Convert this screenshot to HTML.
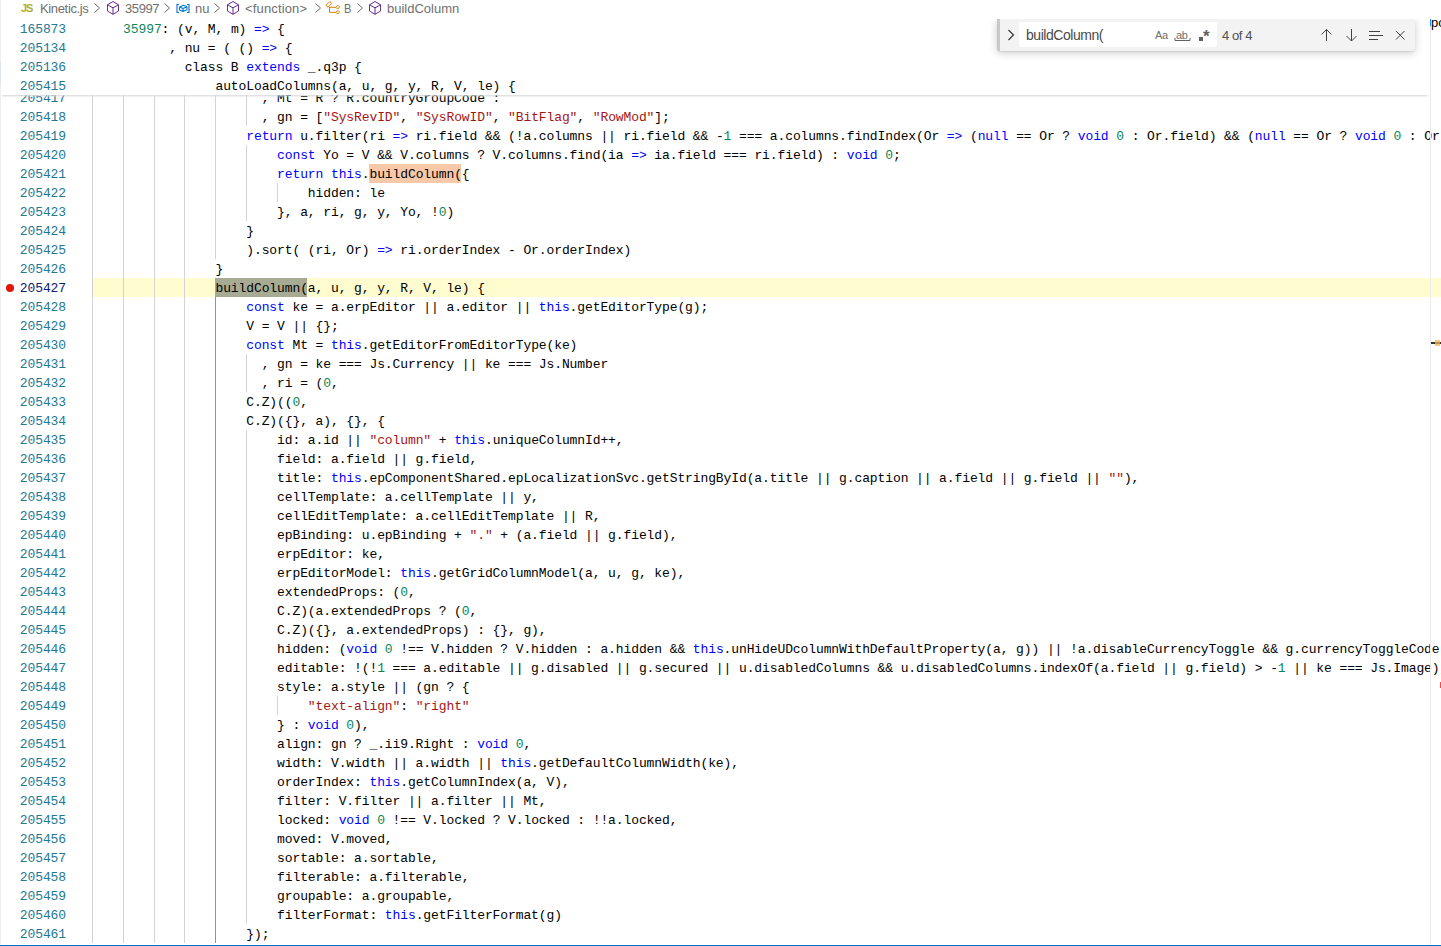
<!DOCTYPE html><html><head><meta charset="utf-8"><style>
*{margin:0;padding:0;box-sizing:border-box}
html,body{width:1441px;height:946px;overflow:hidden;background:#fff}
body{position:relative;font-family:"Liberation Mono",monospace}
i{font-style:normal}
.k{color:#0000ff}.s{color:#a31515}.n{color:#098658}
.ln{position:absolute;left:0;width:66px;text-align:right;height:19px;line-height:19px;font-size:13px;letter-spacing:-0.103px;color:#237893;white-space:pre;padding-top:1.0px}
.ln.act{color:#0b216f}
.cl{position:absolute;left:92.3px;height:19px;line-height:19px;font-size:13px;letter-spacing:-0.103px;color:#000;white-space:pre;padding-top:1.0px}
.g{position:absolute;width:1px;background:#d3d3d3}
.g.act{background:#939393}
#main{position:absolute;left:0;top:0;width:1441px;height:944px;overflow:hidden}
#curline{position:absolute;left:92px;top:278px;width:1349px;height:19px;background:#fffcd0}
#sel{position:absolute;left:215px;top:278px;width:92px;height:19px;background:#a8ab94}
#fm{position:absolute;left:369px;top:164px;width:92px;height:19px;background:#f8c9a8}
#sticky{position:absolute;left:0;top:19px;width:1430px;height:76px;background:#fff;overflow:hidden;box-shadow:#d4d4d4 0 3px 2px -2px}
#crumbs{position:absolute;left:0;top:0;width:1441px;height:19px;background:#fff;font-family:"Liberation Sans",sans-serif;font-size:13px;color:#616161}
#bp{position:absolute;left:6px;top:284px;width:8px;height:8px;border-radius:50%;background:#e51400}
#ruler{position:absolute;left:1430px;top:26px;width:1px;height:919px;background:#ebebeb}
#status{position:absolute;left:0;top:945px;width:1441px;height:1px;background:#0070c8}
#leftb{position:absolute;left:0;top:0;width:1px;height:946px;background:#efefef}
#find{position:absolute;left:997px;top:19px;width:418px;height:32px;background:#f3f3f3;border-left:3px solid #c8c8c8;border-radius:0 0 3px 3px;box-shadow:0 1px 1px rgba(0,0,0,.08),0 2px 8px 0 rgba(0,0,0,.2);clip-path:inset(0 -20px -20px -20px);font-family:"Liberation Sans",sans-serif;font-size:13px;color:#3b3b3b}
#fin{position:absolute;left:19px;top:3px;width:198px;height:25px;background:#fff;border-radius:2px}
.jsi{position:absolute;top:2px;font-family:"Liberation Sans",sans-serif;font-weight:bold;font-size:11px;color:#b0ae2c;letter-spacing:-1px}
.ct{position:absolute;top:0.6px;white-space:pre;color:#707070}
.chev,.ico{position:absolute;top:0}
.ft{position:absolute;white-space:pre}
.sm{font-size:11px;color:#707070}
#po{position:absolute;left:1431px;top:14.5px;font-family:"Liberation Sans",sans-serif;font-size:13px;color:#000}
#pobar{position:absolute;left:1430px;top:19px;width:1px;height:7px;background:#1a85ff}
</style></head><body>
<div id="main">
<div id="curline"></div>
<div id="sel"></div>
<div id="fm"></div>
<div class="g" style="left:92px;top:88px;height:855px"></div>
<div class="g" style="left:123px;top:88px;height:855px"></div>
<div class="g" style="left:154px;top:88px;height:855px"></div>
<div class="g" style="left:184px;top:88px;height:855px"></div>
<div class="g" style="left:215px;top:88px;height:171px"></div>
<div class="g act" style="left:215px;top:297px;height:646px"></div>
<div class="g" style="left:246px;top:88px;height:38px"></div>
<div class="g" style="left:246px;top:145px;height:76px"></div>
<div class="g" style="left:246px;top:354px;height:38px"></div>
<div class="g" style="left:246px;top:430px;height:494px"></div>
<div class="g" style="left:277px;top:183px;height:19px"></div>
<div class="g" style="left:277px;top:696px;height:19px"></div>
<div class="ln" style="top:88px">205417</div>
<div class="cl" style="top:88px">                      , Mt = R ? R.countryGroupCode :</div>
<div class="ln" style="top:107px">205418</div>
<div class="cl" style="top:107px">                      , gn = [<i class="s">&quot;SysRevID&quot;</i>, <i class="s">&quot;SysRowID&quot;</i>, <i class="s">&quot;BitFlag&quot;</i>, <i class="s">&quot;RowMod&quot;</i>];</div>
<div class="ln" style="top:126px">205419</div>
<div class="cl" style="top:126px">                    <i class="k">return</i> u.filter(ri <i class="k">=&gt;</i> ri.field &amp;&amp; (!a.columns || ri.field &amp;&amp; -<i class="n">1</i> === a.columns.findIndex(Or <i class="k">=&gt;</i> (<i class="k">null</i> == Or ? <i class="k">void</i> <i class="n">0</i> : Or.field) &amp;&amp; (<i class="k">null</i> == Or ? <i class="k">void</i> <i class="n">0</i> : Or.field) === ri.field)))</div>
<div class="ln" style="top:145px">205420</div>
<div class="cl" style="top:145px">                        <i class="k">const</i> Yo = V &amp;&amp; V.columns ? V.columns.find(ia <i class="k">=&gt;</i> ia.field === ri.field) : <i class="k">void</i> <i class="n">0</i>;</div>
<div class="ln" style="top:164px">205421</div>
<div class="cl" style="top:164px">                        <i class="k">return</i> <i class="k">this</i>.buildColumn({</div>
<div class="ln" style="top:183px">205422</div>
<div class="cl" style="top:183px">                            hidden: le</div>
<div class="ln" style="top:202px">205423</div>
<div class="cl" style="top:202px">                        }, a, ri, g, y, Yo, !<i class="n">0</i>)</div>
<div class="ln" style="top:221px">205424</div>
<div class="cl" style="top:221px">                    }</div>
<div class="ln" style="top:240px">205425</div>
<div class="cl" style="top:240px">                    ).sort( (ri, Or) <i class="k">=&gt;</i> ri.orderIndex - Or.orderIndex)</div>
<div class="ln" style="top:259px">205426</div>
<div class="cl" style="top:259px">                }</div>
<div class="ln act" style="top:278px">205427</div>
<div class="cl" style="top:278px">                buildColumn(a, u, g, y, R, V, le) {</div>
<div class="ln" style="top:297px">205428</div>
<div class="cl" style="top:297px">                    <i class="k">const</i> ke = a.erpEditor || a.editor || <i class="k">this</i>.getEditorType(g);</div>
<div class="ln" style="top:316px">205429</div>
<div class="cl" style="top:316px">                    V = V || {};</div>
<div class="ln" style="top:335px">205430</div>
<div class="cl" style="top:335px">                    <i class="k">const</i> Mt = <i class="k">this</i>.getEditorFromEditorType(ke)</div>
<div class="ln" style="top:354px">205431</div>
<div class="cl" style="top:354px">                      , gn = ke === Js.Currency || ke === Js.Number</div>
<div class="ln" style="top:373px">205432</div>
<div class="cl" style="top:373px">                      , ri = (<i class="n">0</i>,</div>
<div class="ln" style="top:392px">205433</div>
<div class="cl" style="top:392px">                    C.Z)((<i class="n">0</i>,</div>
<div class="ln" style="top:411px">205434</div>
<div class="cl" style="top:411px">                    C.Z)({}, a), {}, {</div>
<div class="ln" style="top:430px">205435</div>
<div class="cl" style="top:430px">                        id: a.id || <i class="s">&quot;column&quot;</i> + <i class="k">this</i>.uniqueColumnId++,</div>
<div class="ln" style="top:449px">205436</div>
<div class="cl" style="top:449px">                        field: a.field || g.field,</div>
<div class="ln" style="top:468px">205437</div>
<div class="cl" style="top:468px">                        title: <i class="k">this</i>.epComponentShared.epLocalizationSvc.getStringById(a.title || g.caption || a.field || g.field || <i class="s">&quot;&quot;</i>),</div>
<div class="ln" style="top:487px">205438</div>
<div class="cl" style="top:487px">                        cellTemplate: a.cellTemplate || y,</div>
<div class="ln" style="top:506px">205439</div>
<div class="cl" style="top:506px">                        cellEditTemplate: a.cellEditTemplate || R,</div>
<div class="ln" style="top:525px">205440</div>
<div class="cl" style="top:525px">                        epBinding: u.epBinding + <i class="s">&quot;.&quot;</i> + (a.field || g.field),</div>
<div class="ln" style="top:544px">205441</div>
<div class="cl" style="top:544px">                        erpEditor: ke,</div>
<div class="ln" style="top:563px">205442</div>
<div class="cl" style="top:563px">                        erpEditorModel: <i class="k">this</i>.getGridColumnModel(a, u, g, ke),</div>
<div class="ln" style="top:582px">205443</div>
<div class="cl" style="top:582px">                        extendedProps: (<i class="n">0</i>,</div>
<div class="ln" style="top:601px">205444</div>
<div class="cl" style="top:601px">                        C.Z)(a.extendedProps ? (<i class="n">0</i>,</div>
<div class="ln" style="top:620px">205445</div>
<div class="cl" style="top:620px">                        C.Z)({}, a.extendedProps) : {}, g),</div>
<div class="ln" style="top:639px">205446</div>
<div class="cl" style="top:639px">                        hidden: (<i class="k">void</i> <i class="n">0</i> !== V.hidden ? V.hidden : a.hidden &amp;&amp; <i class="k">this</i>.unHideUDcolumnWithDefaultProperty(a, g)) || !a.disableCurrencyToggle &amp;&amp; g.currencyToggleCode</div>
<div class="ln" style="top:658px">205447</div>
<div class="cl" style="top:658px">                        editable: !(!<i class="n">1</i> === a.editable || g.disabled || g.secured || u.disabledColumns &amp;&amp; u.disabledColumns.indexOf(a.field || g.field) &gt; -<i class="n">1</i> || ke === Js.Image),</div>
<div class="ln" style="top:677px">205448</div>
<div class="cl" style="top:677px">                        style: a.style || (gn ? {</div>
<div class="ln" style="top:696px">205449</div>
<div class="cl" style="top:696px">                            <i class="s">&quot;text-align&quot;</i>: <i class="s">&quot;right&quot;</i></div>
<div class="ln" style="top:715px">205450</div>
<div class="cl" style="top:715px">                        } : <i class="k">void</i> <i class="n">0</i>),</div>
<div class="ln" style="top:734px">205451</div>
<div class="cl" style="top:734px">                        align: gn ? _.ii9.Right : <i class="k">void</i> <i class="n">0</i>,</div>
<div class="ln" style="top:753px">205452</div>
<div class="cl" style="top:753px">                        width: V.width || a.width || <i class="k">this</i>.getDefaultColumnWidth(ke),</div>
<div class="ln" style="top:772px">205453</div>
<div class="cl" style="top:772px">                        orderIndex: <i class="k">this</i>.getColumnIndex(a, V),</div>
<div class="ln" style="top:791px">205454</div>
<div class="cl" style="top:791px">                        filter: V.filter || a.filter || Mt,</div>
<div class="ln" style="top:810px">205455</div>
<div class="cl" style="top:810px">                        locked: <i class="k">void</i> <i class="n">0</i> !== V.locked ? V.locked : !!a.locked,</div>
<div class="ln" style="top:829px">205456</div>
<div class="cl" style="top:829px">                        moved: V.moved,</div>
<div class="ln" style="top:848px">205457</div>
<div class="cl" style="top:848px">                        sortable: a.sortable,</div>
<div class="ln" style="top:867px">205458</div>
<div class="cl" style="top:867px">                        filterable: a.filterable,</div>
<div class="ln" style="top:886px">205459</div>
<div class="cl" style="top:886px">                        groupable: a.groupable,</div>
<div class="ln" style="top:905px">205460</div>
<div class="cl" style="top:905px">                        filterFormat: <i class="k">this</i>.getFilterFormat(g)</div>
<div class="ln" style="top:924px">205461</div>
<div class="cl" style="top:924px">                    });</div>
</div>
<div id="bp"></div>
<div id="sticky"><div class="ln" style="top:0px">165873</div>
<div class="cl" style="top:0px">    <i class="n">35997</i>: (v, M, m) <i class="k">=&gt;</i> {</div>
<div class="ln" style="top:19px">205134</div>
<div class="cl" style="top:19px">          , nu = ( () <i class="k">=&gt;</i> {</div>
<div class="ln" style="top:38px">205136</div>
<div class="cl" style="top:38px">            class B <i class="k">extends</i> _.q3p {</div>
<div class="ln" style="top:57px">205415</div>
<div class="cl" style="top:57px">                autoLoadColumns(a, u, g, y, R, V, le) {</div></div>

<div id="crumbs">
<span class="jsi" style="left:21px">JS</span>
<span class="ct" style="left:40px;letter-spacing:-0.35px">Kinetic.js</span>
<svg class="chev" style="left:91px" width="12" height="16" viewBox="0 0 12 16"><path d="M3.5 3.5 L8.5 8 L3.5 12.5" fill="none" stroke="#6a6a6a" stroke-width="1"/></svg>
<svg class="ico" style="left:105px" width="16" height="16" viewBox="0 0 16 16"><path d="M8 1.5 L13.5 4.8 V11 L8 14.3 L2.5 11 V4.8 Z M2.5 4.8 L8 7.8 L13.5 4.8 M8 7.8 V14.3" fill="none" stroke="#652d90" stroke-width="1" stroke-linejoin="round"/></svg>
<span class="ct" style="left:125px;letter-spacing:-0.4px">35997</span>
<svg class="chev" style="left:161px" width="12" height="16" viewBox="0 0 12 16"><path d="M3.5 3.5 L8.5 8 L3.5 12.5" fill="none" stroke="#6a6a6a" stroke-width="1"/></svg>
<svg class="ico" style="left:175px" width="16" height="16" viewBox="0 0 16 16"><path d="M4 4.5 H2 V12.5 H4 M12 4.5 H14 V12.5 H12" fill="none" stroke="#0a6fd0" stroke-width="1.1"/><path d="M4.5 7 L8.5 5.3 L12 6.8 V9.7 L8 11.5 L4.5 9.9 Z M4.5 7 L8 8.6 L12 6.8 M8 8.6 V11.5" fill="none" stroke="#007acc" stroke-width="1.1" stroke-linejoin="round"/></svg>
<span class="ct" style="left:195px">nu</span>
<svg class="chev" style="left:211px" width="12" height="16" viewBox="0 0 12 16"><path d="M3.5 3.5 L8.5 8 L3.5 12.5" fill="none" stroke="#6a6a6a" stroke-width="1"/></svg>
<svg class="ico" style="left:225px" width="16" height="16" viewBox="0 0 16 16"><path d="M8 1.5 L13.5 4.8 V11 L8 14.3 L2.5 11 V4.8 Z M2.5 4.8 L8 7.8 L13.5 4.8 M8 7.8 V14.3" fill="none" stroke="#652d90" stroke-width="1" stroke-linejoin="round"/></svg>
<span class="ct" style="left:245px;letter-spacing:0.15px">&lt;function&gt;</span>
<svg class="chev" style="left:312px" width="12" height="16" viewBox="0 0 12 16"><path d="M3.5 3.5 L8.5 8 L3.5 12.5" fill="none" stroke="#6a6a6a" stroke-width="1"/></svg>
<svg class="ico" style="left:325px" width="16" height="16" viewBox="0 0 16 16"><path d="M1 5.3 L4.8 1.5 L6.8 3.4 L3 7.2 Z M4.5 7 V12.3 H10.8 M4.5 7.3 H10.8 M10.8 7.3 L12.9 5.3 L14.6 7 L12.6 9.1 Z M10.8 12.3 L12.9 10.3 L14.6 12 L12.6 14.1 Z" fill="none" stroke="#d67e00" stroke-width="1" stroke-linejoin="round"/></svg>
<span class="ct" style="left:344px;display:inline-block;transform:scaleX(0.85);transform-origin:0 0">B</span>
<svg class="chev" style="left:354px" width="12" height="16" viewBox="0 0 12 16"><path d="M3.5 3.5 L8.5 8 L3.5 12.5" fill="none" stroke="#6a6a6a" stroke-width="1"/></svg>
<svg class="ico" style="left:367px" width="16" height="16" viewBox="0 0 16 16"><path d="M8 1.5 L13.5 4.8 V11 L8 14.3 L2.5 11 V4.8 Z M2.5 4.8 L8 7.8 L13.5 4.8 M8 7.8 V14.3" fill="none" stroke="#652d90" stroke-width="1" stroke-linejoin="round"/></svg>
<span class="ct" style="left:387px">buildColumn</span>
</div>
<div id="ruler"></div>
<div id="find"><svg style="position:absolute;left:5px;top:9px" width="14" height="14" viewBox="0 0 14 14"><path d="M3.5 2 L8.5 7 L3.5 12" fill="none" stroke="#333" stroke-width="1.15"/></svg>
<div id="fin"><span class="ft" style="left:7px;top:5px;color:#4a4a4a;font-size:14px;letter-spacing:-0.45px">buildColumn(</span>
<span class="ft sm" style="left:136px;top:7px;letter-spacing:-0.3px">Aa</span>
<span class="ft sm" style="left:157px;top:7px;letter-spacing:-0.3px">ab</span>
<svg style="position:absolute;left:155px;top:15px" width="18" height="5" viewBox="0 0 18 5"><path d="M1 1 V3.5 H16 V1" fill="none" stroke="#616161" stroke-width="1"/></svg>
<div style="position:absolute;left:180px;top:15px;width:4px;height:4px;background:#616161"></div>
<span class="ft" style="left:184px;top:5px;font-size:17px;font-weight:bold;color:#616161">*</span>
</div>
<span class="ft" style="left:222px;top:8.6px;letter-spacing:-0.4px;color:#505050">4 of 4</span>
<svg style="position:absolute;left:319px;top:8px" width="16" height="16" viewBox="0 0 16 16"><path d="M7.5 2 V14 M2.5 7.5 L7.5 2.5 L12.5 7.5" fill="none" stroke="#424242" stroke-width="1"/></svg>
<svg style="position:absolute;left:344px;top:8px" width="16" height="16" viewBox="0 0 16 16"><path d="M7.5 2 V14 M2.5 9 L7.5 14 L12.5 9" fill="none" stroke="#424242" stroke-width="1"/></svg>
<svg style="position:absolute;left:369px;top:8px" width="16" height="16" viewBox="0 0 16 16"><path d="M0 4.5 H11 M0 8.5 H14 M0 12.5 H9" fill="none" stroke="#424242" stroke-width="1"/></svg>
<svg style="position:absolute;left:394px;top:8px" width="16" height="16" viewBox="0 0 16 16"><path d="M2 4 L10.5 12.5 M10.5 4 L2 12.5" fill="none" stroke="#424242" stroke-width="1"/></svg>
</div>
<div id="po">po</div><div id="pobar"></div><div style="position:absolute;left:1431px;top:342px;width:10px;height:2px;background:#333"></div><div style="position:absolute;left:1435px;top:340px;width:5px;height:6px;background:rgba(240,180,80,.75)"></div><div style="position:absolute;left:1440px;top:682px;width:1px;height:6px;background:#f44"></div>
<div id="leftb"></div><div style="position:absolute;left:0;top:62px;width:1px;height:23px;background:#dfe4f0"></div>
<div id="status"></div>
</body></html>
